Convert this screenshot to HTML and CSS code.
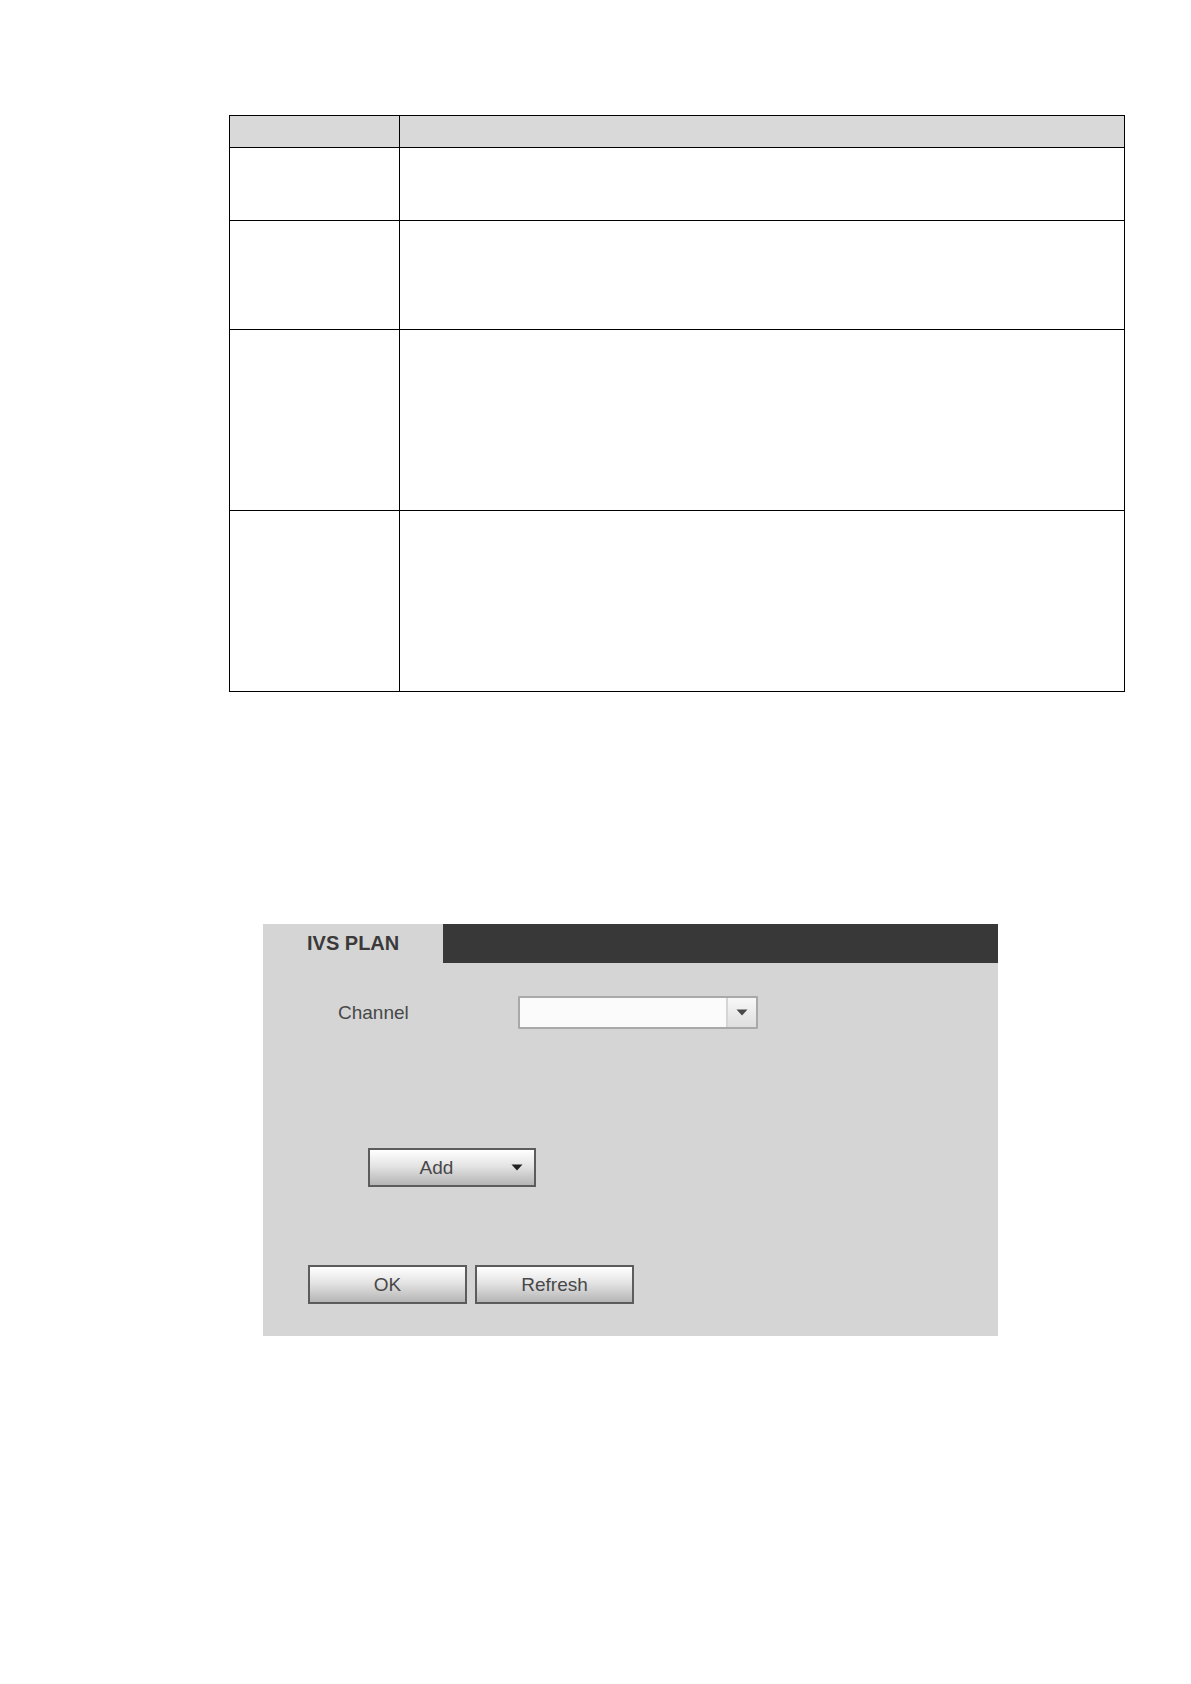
FILE: index.html
```html
<!DOCTYPE html>
<html lang="en">
<head>
<meta charset="utf-8">
<title>IVS PLAN</title>
<link rel="stylesheet" href="styles.css">
</head>
<body>
<main class="page">
  <table class="params">
    <thead>
      <tr class="row-head"><th class="col-name"></th><th></th></tr>
    </thead>
    <tbody>
      <tr class="row-short"><td></td><td></td></tr>
      <tr class="row-medium"><td></td><td></td></tr>
      <tr class="row-tall"><td></td><td></td></tr>
      <tr class="row-tall"><td></td><td></td></tr>
    </tbody>
  </table>

  <section class="panel">
    <header class="tabs"><h1 class="tab">IVS PLAN</h1></header>
    <form class="form">
      <div class="field">
        <label class="label" for="channel">Channel</label>
        <div class="select">
          <select class="select-box" id="channel"><option></option></select>
          <span class="select-knob"><svg class="arrow" viewBox="0 0 12 7"><path d="M0.5 0.5h11L6 6.5z"/></svg></span>
        </div>
      </div>
      <button class="button button-add" type="button">
        <span class="button-text">Add</span>
        <svg class="arrow arrow-dark" viewBox="0 0 12 7"><path d="M0.5 0.5h11L6 6.5z"/></svg>
      </button>
      <div class="actions">
        <button class="button" type="button">OK</button>
        <button class="button" type="button">Refresh</button>
      </div>
    </form>
  </section>
</main>
</body>
</html>
```
FILE: styles.css
```css
* {
  box-sizing: border-box;
}

body {
  margin: 0;
  background: #fff;
  color: #484848;
  font: 19px/24px "Liberation Sans", Arial, sans-serif;
}

.page {
  padding: 115px 66px 115px 229px;
}

/* Parameter table */
.params {
  width: 100%;
  border-collapse: collapse;
  table-layout: fixed;
}

.params th,
.params td {
  padding: 0;
  border: 1px solid #000;
}

.col-name {
  width: 170px;
}

.row-head {
  height: 32px;
  background: #d9d9d9;
}

.row-short {
  height: 73px;
}

.row-medium {
  height: 109px;
}

.row-tall {
  height: 181px;
}

/* Settings panel */
.panel {
  margin: 232px 127px 0 34px;
  background: #d5d5d5;
}

.tabs {
  display: flex;
  background: #383838;
}

.tab {
  width: 180px;
  margin: 0;
  padding: 7px 0 8px 44px;
  background: #d5d5d5;
  color: #3a3a3a;
  font-size: 20px;
  line-height: 24px;
}

.form {
  display: flex;
  flex-direction: column;
  align-items: flex-start;
  padding: 33px 45px 32px;
}

.field {
  display: flex;
  align-items: center;
  padding-left: 30px;
}

.label {
  width: 180px;
}

.select {
  display: grid;
  width: 240px;
  height: 33px;
}

.select-box,
.select-knob {
  grid-area: 1 / 1;
}

.select-box {
  appearance: none;
  padding: 0 34px 0 8px;
  border: 2px solid #a9a9a9;
  border-radius: 1px;
  background: #fbfbfb;
  color: inherit;
  font: inherit;
}

.select-knob {
  display: flex;
  align-items: center;
  justify-content: center;
  justify-self: end;
  width: 30px;
  margin: 2px;
  border-left: 2px solid #d5d5d5;
  background: linear-gradient(#f8f8f8, #dedede);
  pointer-events: none;
}

.arrow {
  width: 12px;
  height: 7px;
  fill: #484848;
}

.arrow-dark {
  fill: #222;
}

.button {
  width: 159px;
  height: 39px;
  padding: 0;
  border: 2px solid #5c5c5c;
  background: linear-gradient(#fff, #e4e4e4 45%, #b5b5b5);
  color: inherit;
  font: inherit;
}

.button-add {
  display: flex;
  align-items: center;
  width: 168px;
  margin: 119px 0 78px 60px;
  padding-right: 11px;
}

.button-text {
  flex: 1;
  padding-right: 8px;
}

.actions {
  display: flex;
  gap: 8px;
}
```
